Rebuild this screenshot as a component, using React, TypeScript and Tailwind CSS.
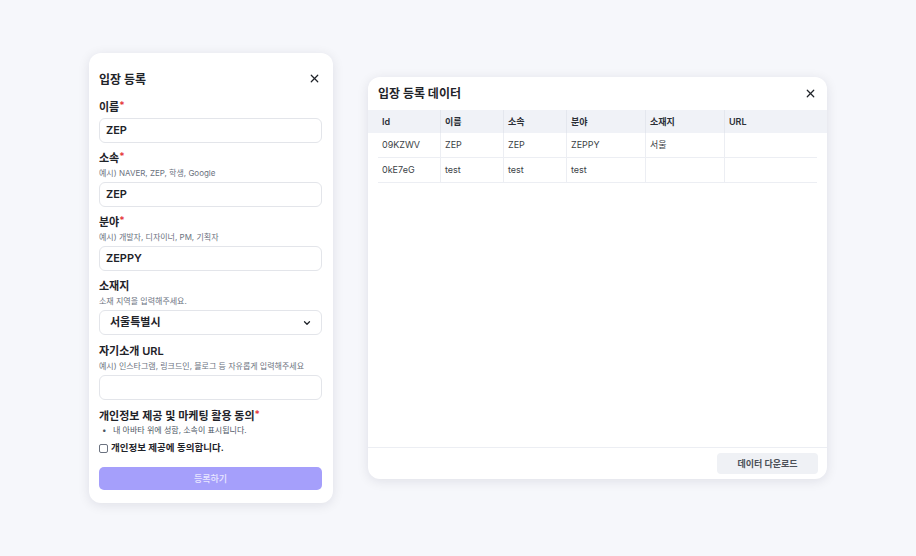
import { X, ChevronDown } from "lucide-react";

const font = { fontFamily: "Inter, 'Noto Sans CJK KR', sans-serif" };

function Req() {
  return <span className="text-[#e5383b] text-[10px] align-top leading-[12px]">*</span>;
}

function Label({ text, required }: { text: string; required?: boolean }) {
  return (
    <div className="h-[16px] leading-[16px] text-[11px] font-semibold text-[#1f2329]">
      {text}
      {required && <Req />}
    </div>
  );
}

function Hint({ text }: { text: string }) {
  return <div className="h-[14px] leading-[14px] text-[8px] text-[#6b7280]">{text}</div>;
}

function Field({ value, className }: { value: string; className?: string }) {
  return (
    <div
      className={
        "h-[25px] border border-[#e3e5ea] rounded-[6px] pl-[6px] flex items-center text-[11px] font-semibold text-[#1f2329] " +
        (className ?? "")
      }
    >
      {value}
    </div>
  );
}

const rows = [
  ["09KZWV", "ZEP", "ZEP", "ZEPPY", "서울", ""],
  ["0kE7eG", "test", "test", "test", "", ""],
];
const heads = ["Id", "이름", "소속", "분야", "소재지", "URL"];

export default function App() {
  return (
    <div style={font} className="w-[916px] h-[556px] bg-[#f6f7fb] flex items-start pl-[89px] pt-[53px] gap-[35px]">
      {/* Register form */}
      <div className="w-[244px] h-[450px] bg-white rounded-[12px] shadow-[0_2px_12px_rgba(20,20,50,0.10)] pl-[10px] pr-[11px] pt-[17px] flex flex-col">
        <div className="h-[20px] flex items-center justify-between">
          <span className="text-[12px] font-bold text-[#1f2329]">입장 등록</span>
          <X size={13} strokeWidth={2.2} className="mr-[1px] -mt-[3px] text-[#1f2329]" />
        </div>

        <div className="mt-[9px]">
          <Label text="이름" required />
          <Field value="ZEP" className="mt-[3px]" />
        </div>

        <div className="mt-[7px]">
          <Label text="소속" required />
          <Hint text="예시) NAVER, ZEP, 학생, Google" />
          <Field value="ZEP" className="mt-[2px]" />
        </div>

        <div className="mt-[7px]">
          <Label text="분야" required />
          <Hint text="예시) 개발자, 디자이너, PM, 기획자" />
          <Field value="ZEPPY" className="mt-[2px]" />
        </div>

        <div className="mt-[7px]">
          <Label text="소재지" />
          <Hint text="소재 지역을 입력해주세요." />
          <div className="mt-[2px] h-[25px] border border-[#e3e5ea] rounded-[6px] pl-[10px] pr-[9px] flex items-center justify-between text-[11px] font-semibold text-[#1f2329]">
            <span>서울특별시</span>
            <ChevronDown size={10} strokeWidth={3} />
          </div>
        </div>

        <div className="mt-[8px]">
          <Label text="자기소개 URL" />
          <Hint text="예시) 인스타그램, 링크드인, 블로그 등 자유롭게 입력해주세요" />
          <Field value="" className="mt-[2px]" />
        </div>

        <div className="mt-[8px]">
          <Label text="개인정보 제공 및 마케팅 활용 동의" required />
          <div className="h-[12px] leading-[12px] text-[8px] text-[#4b5563] flex items-center pl-[3px]">
            <span className="w-[11px]">•</span>
            <span>내 아바타 위에 성함, 소속이 표시됩니다.</span>
          </div>
          <div className="mt-[5px] h-[14px] flex items-center gap-[3px]">
            <div className="w-[9px] h-[9px] border border-[#6b7280] rounded-[2px]" />
            <span className="text-[9.5px] font-semibold text-[#1f2329]">개인정보 제공에 동의합니다.</span>
          </div>
        </div>

        <button className="mt-[12px] h-[23px] rounded-[5px] bg-[#a59ffb] text-[#e9e7ff] text-[9px] font-medium">
          등록하기
        </button>
      </div>

      {/* Data table */}
      <div className="mt-[24px] w-[459px] h-[402px] bg-white rounded-[12px] shadow-[0_2px_12px_rgba(20,20,50,0.10)] flex flex-col overflow-hidden">
        <div className="h-[33px] flex items-center justify-between pl-[10px] pr-[10px]">
          <span className="text-[12px] font-bold text-[#1f2329]">입장 등록 데이터</span>
          <X size={13} strokeWidth={2.2} className="text-[#1f2329]" />
        </div>

        <div className="bg-[#f0f2f7] px-[10px]">
          <div className="grid grid-cols-[63px_63px_63px_79px_79px_93px] h-[23px]">
            {heads.map((h, i) => (
              <div
                key={h}
                className={
                  "pl-[4px] flex items-center text-[9px] font-semibold text-[#2b2f36] " +
                  (i < 5 ? "border-r border-[#e4e7ee]" : "")
                }
              >
                {h}
              </div>
            ))}
          </div>
        </div>

        <div className="px-[10px]">
          {rows.map((r, ri) => (
            <div key={ri} className="grid grid-cols-[63px_63px_63px_79px_79px_93px] h-[25px] border-b border-[#eceef3]">
              {r.map((c, i) => (
                <div
                  key={i}
                  className={
                    "pl-[4px] flex items-center text-[9px] text-[#3b3f46] " +
                    (i < 5 ? "border-r border-[#eceef3]" : "")
                  }
                >
                  {c}
                </div>
              ))}
            </div>
          ))}
        </div>

        <div className="flex-1" />

        <div className="border-t border-[#eceef3] h-[32px] flex items-start justify-end pt-[5px] pr-[9px]">
          <button className="w-[101px] h-[21px] rounded-[4px] bg-[#eff1f5] text-[9px] font-semibold text-[#4b5058]">
            데이터 다운로드
          </button>
        </div>
      </div>
    </div>
  );
}
